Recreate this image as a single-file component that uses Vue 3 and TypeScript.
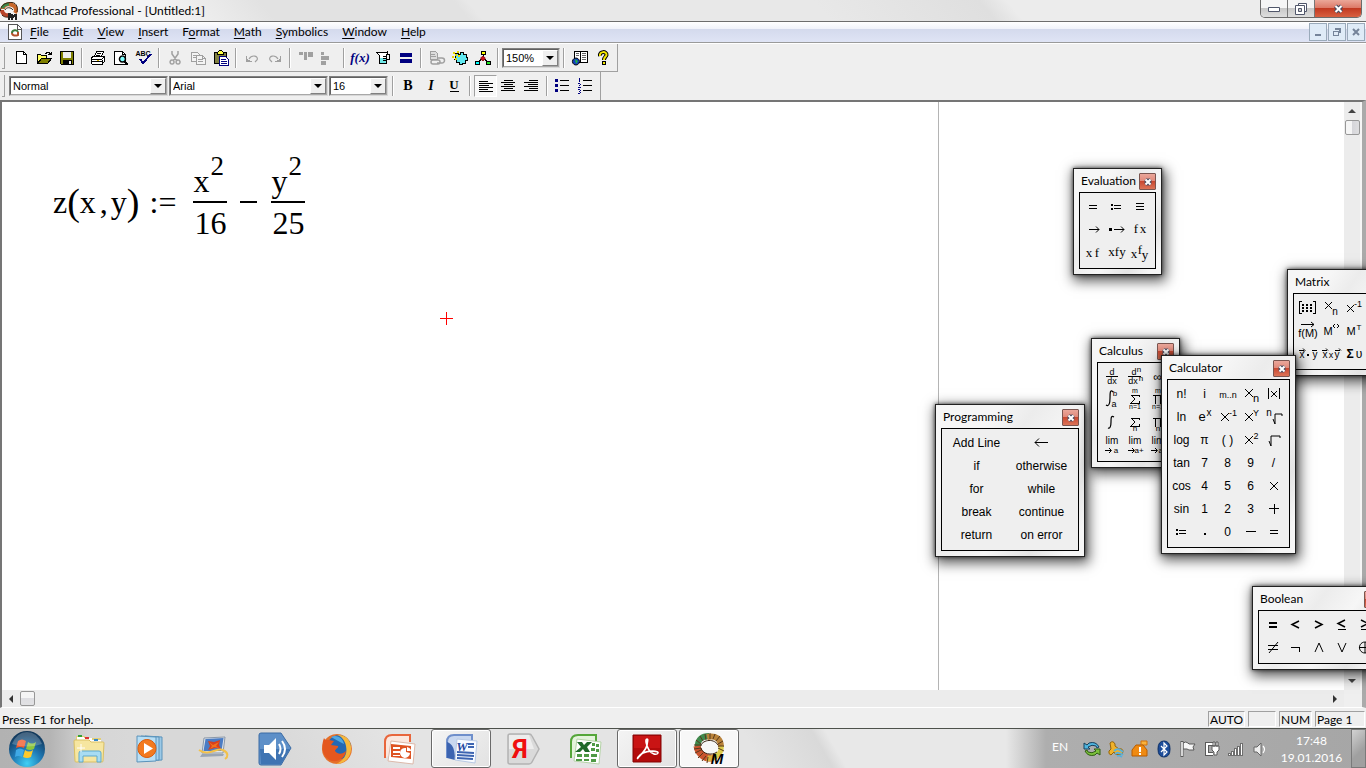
<script setup lang="ts">
import { defineComponent, h, ref, type PropType } from 'vue'

interface Shape {
  d?: string
  f?: string
  s?: string
  w?: number
  soft?: boolean
  t?: string
  x?: number
  y?: number
  z?: number
  ff?: string
  b?: boolean
  i?: boolean
}

const p = (d: string, f = 'none', s = 'none', w = 1): Shape => ({ d, f, s, w })
const c = (d: string, f = 'none', s = 'none', w = 1): Shape => ({ d, f, s, w, soft: true })
const t = (text: string, x: number, y: number, z = 9, o: Partial<Shape> = {}): Shape => ({ t: text, x, y, z, ...o })

const Pic = defineComponent({
  props: {
    shapes: { type: Array as PropType<Shape[]>, required: true },
    w: { type: Number, default: 16 },
    h: { type: Number, default: 16 },
  },
  setup(props) {
    return () =>
      h(
        'svg',
        { width: props.w, height: props.h, viewBox: `0 0 ${props.w} ${props.h}`, 'aria-hidden': 'true', style: 'display:block;flex:none;overflow:visible' },
        props.shapes.map((a) =>
          a.t !== undefined
            ? h('text', { x: a.x, y: a.y, 'font-size': a.z, fill: a.f ?? '#000', 'text-anchor': 'middle', 'font-family': a.ff ?? '"Liberation Sans", sans-serif', 'font-weight': a.b ? 700 : 400, 'font-style': a.i ? 'italic' : 'normal' }, a.t)
            : h('path', { d: a.d, fill: a.f, stroke: a.s, 'stroke-width': a.w, 'shape-rendering': a.soft ? 'auto' : 'crispEdges' }),
        ),
      )
  },
})

const serif = { ff: '"Liberation Serif", serif' }
const K = '#000'
const N = '#000080'
const G = '#a0a0a0'

const logo: Shape[] = [
  c('M3 7C3 3 8 1 12 3C16 4 17 8 15 11', 'none', '#c8672a', 4),
  c('M2 8C2 12 6 14 10 13', 'none', '#b8452a', 4),
  c('M2 6C4 3 7 2 9 2.500', 'none', '#3c8a4a', 3),
  c('M.5 9C0 3 7 0 12 .5S18 6 17 10M5 8C6 5 11 5 13 8M2 13C5 16 8 15 10 15', 'none', '#3a2412', 1),
  p('M8 11h3v1h2v1h1v-1h3v6h-2v-3h-1v1h-1v2h-2v-2h-1v2h-2z', '#222'),
]
const doc: Shape[] = [p('M.5.5h9l4 4v11h-13z', '#fff', '#555'), p('M9.500 1v4h4', 'none', '#555'), c('M4 9C4 6 9 5 10 8', 'none', '#3c7a3c', 2), c('M4 9C4 12 8 12 10 11V8', 'none', '#b4502a', 2)]

interface Tool { name: string; g?: Shape[]; sep?: boolean; on?: boolean; zoom?: boolean }
const sep: Tool = { name: '', sep: true }

const tools: Tool[] = [
  { name: 'New', g: [p('M3.500 1.500h7l3 3v9h-10z', '#fff', K), p('M10.500 1.500v3h3', 'none', K)] },
  { name: 'Open', g: [p('M1.500 13.500v-9h3l1 1h5v3h-5z', '#ffff60', K), p('M1.500 13.500l4-5h10l-4 5z', '#808000', K), p('M9 3h1v-1h3v1h1v1h1v-2M12 4.500h3', 'none', K)] },
  { name: 'Save', g: [p('M1.500 1.500h13v13h-12l-1-1z', '#808000', K), p('M4 2h8v6h-8z', '#efefef'), p('M4 10h9v4h-9z', K), p('M10 11h2v3h-2z', '#efefef')] },
  sep,
  { name: 'Print', g: [p('M4.500 6.500l2-5h7l-2 5', '#fff', K), p('M7 3.500h4M6 5.500h4', 'none', K), p('M1.500 7.500l2-1h11v5l-3 3h-9l-1-1z', '#fff', K), p('M1.500 9.500h10l3-3M2 11.500h10v3M12 9.500v2', 'none', K), p('M7 10h2v1h-2z', '#d0b000')] },
  { name: 'Print Preview', g: [p('M1.500 1.500h8l3 3v10h-11z', '#fff', K), p('M9.500 1.500v3h3', 'none', K), c('M9.500 6a3 3 0 1 1-.1 0', '#80ffff', K, 1.500), p('M11 11h2v1h1v1h1v2h-2v-1h-1v-1h-1z', K)] },
  { name: 'Spelling', g: [t('ABC', 7, 6, 7, { b: true }), p('M4 9l3 4 8-9', 'none', N, 2)] },
  sep,
  { name: 'Cut', g: [c('M5 1v3l5 7M11 1v3l-5 7M5 10a2 2 0 1 0 .1 0M11 10a2 2 0 1 0 .1 0', 'none', G, 1.500)] },
  { name: 'Copy', g: [p('M1.500 2.500h6l2 2v7h-8z', '#f4f4f4', G), p('M3 5.500h4M3 7.500h4', 'none', G), p('M6.500 5.500h6l3 3v6h-9z', '#f4f4f4', G), p('M8 9.500h5M8 11.500h5M12.500 5.500v3h3', 'none', G)] },
  { name: 'Paste', g: [p('M1.500 2.500h12v11h-12z', '#808040', K), p('M4.500 2.500l2-2h2l2 2v2h-6z', '#ffff40', K), p('M6.500 6.500h6l3 3v6h-9z', '#fff', N), p('M8 9.500h5M8 11.500h6M8 13.500h6', 'none', N)] },
  sep,
  { name: 'Undo', g: [p('M2 6v6h6v-1h-2v-1h-2v-1h-1v-3z', G), c('M5 9C8 4 15 6 13 10L11 12', 'none', G, 1.200)] },
  { name: 'Redo', g: [p('M14 6v6h-6v-1h2v-1h2v-1h1v-3z', G), c('M11 9C8 4 1 6 3 10L5 12', 'none', G, 1.200)] },
  sep,
  { name: 'Align Across', g: [p('M1 2h4v3h-4zM6 2h3v8h-3zM10 2h5v5h-5z', G)] },
  { name: 'Align Down', g: [p('M0 2h3v3h-3zM0 6h8v4h-8zM0 11h5v4h-5z', G)] },
  sep,
  { name: 'Insert Function', g: [t('f(x)', 8, 12, 13, { ff: '"Liberation Serif", serif', b: true, i: true, f: N })] },
  { name: 'Insert Unit', g: [p('M1.500 2.500h10l1-1v2l-1 2v8h-7v-8l-3-3z', '#fff', K), p('M5 8h6v5h-6z', '#70e8e8'), p('M12 4.500h2.500v5h-3M8 6.500h3M8 8.500h3M8 10.500h3', 'none', K)] },
  { name: 'Calculate', g: [p('M2 3h12v4h-12zM2 9h12v4h-12z', N)] },
  sep,
  { name: 'Insert Hyperlink', g: [p('M1.500 1.500h5l2 2v6h-7z', '#ddd', G), p('M2 4.500h4M2 6.500h5', 'none', G), c('M4 10h5a2 2 0 0 1 0 4h-5a2 2 0 0 1 0-4M8 8h5a2 2 0 0 1 0 5h-5', 'none', G, 1.500)] },
  { name: 'Component Wizard', g: [p('M4 3h2v1h2v-2h3v2h3v3h1v3h-2v3h-3v1h-3v-2h-3v-3h-1z', '#60e8f0', K), p('M1 2h2v2h-2zM5 1h2v2h-2zM3 4h2v2h-2zM0 6h2v2h-2zM6 5h2v2h-2zM3 8h2v2h-2z', '#e8d800')] },
  { name: 'Run MathConnex', g: [p('M8 5v4M8 8l-5 4M8 8l5 4', 'none', K), p('M6.500 1.500h4v3h-4z', '#ff0', K), c('M8 6.500a2 2 0 1 1-.1 0', '#d01020', '#800'), p('M.5 11.500h4v3h-4z', '#0ff', K), p('M11.500 11.500h4v3h-4z', '#20e820', K)] },
  sep,
  { name: 'Zoom', zoom: true },
  sep,
  { name: 'Resource Center', g: [p('M3.500 1.500h5v11h-6v-11zM8.500 1.500h7v11h-7', '#fff', K), p('M4 3.500h3M4 5.500h3M10 3.500h4M10 5.500h4M10 7.500h4M10 9.500h4', 'none', '#666'), c('M4 8a3.500 3.500 0 1 1-.1 0', '#1540c0', K), c('M3 9l3 2-2 3', '#20b840')] },
  { name: 'Help', g: [c('M5 6C4 1 12 1 11.500 5C11 7 9 7 9 10', 'none', K, 4), c('M5 6C4 1 12 1 11.500 5C11 7 9 7 9 10', 'none', '#f5e800', 2), p('M7.500 11.500h3v3h-3z', '#f5e800', K)] },
]

const lines = (a: number[][]): Shape[] => [p(a.map(([x, y, w]) => `M${x} ${y}.5h${w}`).join(''), 'none', K)]
const bserif = { ff: '"Liberation Serif", serif', b: true }
const formats: Tool[] = [
  { name: 'Bold', g: [t('B', 7, 12, 14, bserif)] },
  { name: 'Italic', g: [t('I', 7, 12, 14, { ...bserif, i: true })] },
  { name: 'Underline', g: [t('U', 7, 11, 13, bserif), p('M3 13.500h9', 'none', K)] },
  sep,
  { name: 'Align Left', on: true, g: lines([[1, 3, 9], [1, 5, 14], [1, 7, 10], [1, 9, 14], [1, 11, 9], [1, 13, 14]]) },
  { name: 'Center', g: lines([[3, 2, 9], [0, 4, 14], [3, 6, 9], [0, 8, 14], [3, 10, 9], [0, 12, 14]]) },
  { name: 'Align Right', g: lines([[5, 2, 9], [0, 4, 14], [4, 6, 10], [0, 8, 14], [5, 10, 9], [0, 12, 14]]) },
  sep,
  { name: 'Bullets', g: [p('M0 1h3v3h-3zM0 6h3v3h-3zM0 11h3v3h-3z', N), p('M5 2.500h9M5 7.500h9M5 12.500h9', 'none', K)] },
  { name: 'Numbering', g: [p('M1 .5h1M1.500 0v4M0 5.500h2M2.500 6v1M1.500 7v1M0 9.500h3M0 11.500h2M2.500 12v1M1 13.500h1M2.500 14v1M0 15.500h2', 'none', N), p('M5 2.500h9M5 7.500h9M5 12.500h9', 'none', K)] },
]

const menus = ['File', 'Edit', 'View', 'Insert', 'Format', 'Math', 'Symbolics', 'Window', 'Help'].map((m) => {
  const at = m === 'Format' ? 1 : 0
  return { pre: m.slice(0, at), key: m[at], post: m.slice(at + 1) }
})

interface Key { l?: string; g?: Shape[]; n?: string }
interface Palette { title: string; x: number; y: number; cols: number; cell: number; keys: Key[] }
const L = (...s: string[]): Key[] => s.map((l) => ({ l }))
const g = (n: string, ...s: Shape[]): Key => ({ n, g: s })

const eq = p('M7 10.500h8M7 13.500h8', 'none', K)
const assign = g('Definition', p('M6 9h2v2h-2zM6 13h2v2h-2z', K), p('M9 10.500h7M9 13.500h7', 'none', K))
const sigma = p('M8 7h8v2M8 7l4 4-4 4h8v-2', 'none', K)
const pi = p('M7 7.500h10M9.500 7v9M14.500 7v9', 'none', K)
const lim = (end: string): Key => g('Limit ' + end, t('lim', 12, 10, 10), c('M5 16.500h6M9 14l2.500 2.500-2.500 2.500', 'none', K), t(end, 16, 19, 8))
const arrow = (x: number) => c(`M${x} 11.500h10M${x + 7} 8.500l3 3-3 3`, 'none', K)

const palettes: Palette[] = [
  {
    title: 'Evaluation', x: 1073, y: 168, cols: 3, cell: 23,
    keys: [
      g('Evaluate', eq), assign, g('Global Definition', p('M8 8.500h8M8 11.500h8M8 14.500h8', 'none', K)),
      g('Symbolic Evaluation', arrow(7)), g('Symbolic Keyword', p('M4 10h3v3h-3z', K), arrow(9)), g('Prefix', t('f', 8, 15, 13, serif), t('x', 15, 15, 13, serif)),
      g('Postfix', t('x', 7, 16, 13, serif), t('f', 15, 16, 13, serif)), g('Infix', t('xfy', 12, 15, 13, serif)), g('Treefix', t('x', 6, 17, 13, serif), t('f', 12, 13, 13, serif), t('y', 17, 18, 13, serif)),
    ],
  },
  {
    title: 'Matrix', x: 1287, y: 269, cols: 4, cell: 23,
    keys: [
      g('Matrix', p('M6 5.500h-2.500v12h2.500M17 5.500h2.500v12h-2.500', 'none', K), p('M6 8h2v2h-2zM10 8h2v2h-2zM14 8h2v2h-2zM6 11h2v2h-2zM10 11h2v2h-2zM14 11h2v2h-2zM6 14h2v2h-2zM10 14h2v2h-2zM14 14h2v2h-2z', K)),
      g('Subscript', c('M6 6l7 7M13 6l-7 7', 'none', K), t('n', 16, 19, 10)), g('Inverse', c('M5 9l7 7M12 9l-7 7', 'none', K), t('-1', 16, 11, 9)), g('Determinant', p('M5.500 6v11M16.500 6v11', 'none', K), c('M8 9l6 6M14 9l-6 6', 'none', K)),
      g('Vectorize', t('f(M)', 12, 18, 11), c('M5 5.500h13M15 3l3 2.500-3 2.500', 'none', K)), g('Column', t('M', 9, 16, 11), c('M16 5l-2 2 2 2M18 5l2 2-2 2', 'none', K)), g('Transpose', t('M', 9, 16, 11), t('T', 17, 11, 8)), g('Range', p('M4 14h2v2h-2zM10 14h2v2h-2zM16 14h2v2h-2z', K)),
      g('Dot Product', t('x', 6, 16, 10), p('M11 12h2v2h-2z', K), t('y', 19, 16, 10), c('M3 8.500h5M7 6.500l2 2-2 2M16 8.500h5', 'none', K)), g('Cross Product', t('x', 6, 16, 10), t('x', 12, 16, 9), t('y', 18, 16, 10), c('M3 8.500h5M7 6.500l2 2M16 8.500h5M20 6.500l2 2', 'none', K)), g('Vector Sum', t('Σ', 8, 16, 12, { b: true }), t('υ', 17, 16, 12)), g('Picture', p('M5.500 6.500h12v10h-12z', 'none', K)),
    ],
  },
  {
    title: 'Programming', x: 935, y: 404, cols: 2, cell: 65,
    keys: [{ l: 'Add Line' }, g('Local Definition', c('M5 11.500h13M9 7.500l-4 4 4 4', 'none', K)), ...L('if', 'otherwise', 'for', 'while', 'break', 'continue', 'return', 'on error')],
  },
  {
    title: 'Calculus', x: 1091, y: 338, cols: 3, cell: 23,
    keys: [
      g('Derivative', t('d', 12, 10, 9), p('M6 11.500h12', 'none', K), t('dx', 12, 19, 9)), g('Nth Derivative', t('d', 11, 10, 9), t('n', 16, 7, 8), p('M5 11.500h13', 'none', K), t('dx', 10, 19, 9), t('n', 18, 16, 8)), { l: '∞' },
      g('Definite Integral', c('M13 4C10 1 10 5 10 10S9 19 6 17', 'none', K, 1.200), t('b', 15, 8, 8), t('a', 14, 19, 9)), g('Summation', t('m', 12, 5, 7), sigma, t('n=1', 12, 21, 7)), g('Product', t('m', 12, 5, 7), pi, t('n=1', 12, 21, 7)),
      g('Indefinite Integral', c('M14 6C11 4 11 7 11 11S10 18 8 17', 'none', K, 1.200)), g('Range Sum', sigma, t('n', 12, 20, 8)), g('Range Product', pi, t('n', 12, 20, 8)),
      lim('a'), lim('a+'), lim('a-'),
    ],
  },
  {
    title: 'Calculator', x: 1161, y: 355, cols: 5, cell: 23,
    keys: [
      ...L('n!', 'i'), g('Range', t('m..n', 12, 16, 9)), g('Subscript', c('M6 7l8 8M14 7l-8 8', 'none', K), t('n', 17, 20, 11)), g('Absolute Value', p('M6.500 6v11M17.500 6v11', 'none', K), c('M9 9l6 6M15 9l-6 6', 'none', K)),
      ...L('ln'), g('Exponential', t('e', 9, 16, 13), t('x', 16, 11, 10)), g('Inverse', c('M5 8l8 8M13 8l-8 8', 'none', K), t('-1', 17, 11, 9)), g('Power', c('M6 8l8 8M14 8l-8 8', 'none', K), t('Y', 17, 11, 9)), g('Nth Root', t('n', 7, 11, 10), c('M11 14l2 5V9h7v2', 'none', K)),
      ...L('log', 'π', '( )'), g('Square', c('M6 8l8 8M14 8l-8 8', 'none', K), t('2', 17, 11, 9)), g('Square Root', c('M7 13l2 5V8h9v2', 'none', K)),
      ...L('tan', '7', '8', '9', '/', 'cos', '4', '5', '6'), g('Multiply', c('M8 8l8 8M16 8l-8 8', 'none', K)),
      ...L('sin', '1', '2', '3'), g('Add', p('M7 11.500h10M12 6.500v10', 'none', K)),
      assign, g('Decimal Point', p('M11 13h2v2h-2z', K)), { l: '0' }, g('Subtract', p('M7 11.500h10', 'none', K)), g('Evaluate', p('M8 10.500h8M8 13.500h8', 'none', K)),
    ],
  },
  {
    title: 'Boolean', x: 1252, y: 586, cols: 5, cell: 23,
    keys: [
      g('Equal', p('M8 10h8M8 14h8', 'none', K, 2)), g('Less', c('M15 8l-7 3.500 7 3.500', 'none', K, 1.500)), g('Greater', c('M8 8l7 3.500-7 3.500', 'none', K, 1.500)), g('Less or Equal', c('M15 7l-7 3.500 7 3.500', 'none', K, 1.500), p('M8 16.500h8', 'none', K)), g('Greater or Equal', c('M8 7l7 3.500-7 3.500', 'none', K, 1.500), p('M8 16.500h8', 'none', K)),
      g('Not Equal', p('M7 9.500h10M7 13.500h10', 'none', K), c('M8 17l9-11', 'none', K)), g('Not', p('M7 11.500h8v4', 'none', K)), g('And', c('M8 16l4-9 4 9', 'none', K)), g('Or', c('M8 7l4 9 4-9', 'none', K)), g('Xor', c('M12 6a5.500 5.500 0 1 1-.1 0M12 6v11M6 11.500h12', 'none', K)),
    ],
  },
]

const apps: { name: string; g: Shape[]; open?: boolean; front?: boolean }[] = [
  { name: 'Explorer', g: [
    p('M3 3h9l1 2h15v20h-26z', '#e3cf78'), c('M4 4h7v3h-7z', '#fff'), c('M5 2h4v2h-4z', '#35a035'), c('M11 5h8v4h-8z', '#fff'), c('M12 4h4v2h-4z', '#d33'), c('M19 7h9v4h-9z', '#fff'), c('M21 6h4v2h-4z', '#38c'),
    c('M1 8q0-1 1-1h14l2 2h12q1 0 1 1l-1 18q0 1-1 1h-26q-1 0-1-1z', '#f6e6a0', '#d9bf62'), c('M6 29v-9q0-2 2-2h18q2 0 2 2v9h-4v-6h-14v6z', '#a8dcf2', '#5fa9cc'), c('M8 11v8M4 15h8', 'none', '#fff', 1),
  ] },
  { name: 'Windows Media Player', g: [
    c('M10 3l17 1v23l-17 1z', '#9cc9e6', '#5a93bb'), c('M6 3l18 1v23l-18 1z', '#a9d3ee', '#5a93bb'), c('M2 3l19 1v24l-19 1z', '#b9dff5', '#5a93bb'), c('M12 6.500a9 9 0 1 1-.1 0', '#f37a1f', '#d95b0c'), c('M9 10v11l9-5.500z', '#fff'),
  ] },
  { name: 'Picture Viewer', g: [
    c('M7 5l21-1-2 16-21 0z', '#dfe5ec', '#8a97a8'), c('M8.500 6l18-1-2 13h-18z', '#4b7cc4'), c('M11 8l6 1 6-2-1 5 2 4-6-1-7 2 2-4z', '#d7401e'), c('M12 9l4 3 6-3-3 4 3 2-5-1-4 2 2-3z', '#f0721e'), c('M5 21l22 0-1 2-23 1z', '#9aa5b3'), c('M2 17C12 24 20 14 26 17S31 24 28 26', 'none', '#f2c14a', 2),
  ] },
  { name: 'Audio Wizard', g: [
    c('M2 0h20l10 15-10 17h-20q-2 0-2-2v-28q0-2 2-2z', '#5d8fc8', '#3c6ca5'), c('M1 16h30l-9 15h-20z', '#3f74b3'), c('M5 12h5l7-7v22l-7-7h-5z', '#fff'), c('M20 11q3 5 0 10M23 8q6 8 0 16', 'none', '#fff', 2),
  ] },
  { name: 'Firefox', g: [
    c('M16 1a15 15 0 1 1-.1 0', '#e5702a'), c('M18 2a12 12 0 1 1-.1 0', '#2468b4'), c('M16 2C25 1 31 8 30 17C29 26 22 31 15 31C22 28 27 22 25 13C24 7 20 3 16 2', '#f6b73c'), c('M3 5C4 7 5 7 8 7L13 8L10 12L17 13C18 15 14 16 14 18C17 22 22 21 25 18C24 27 13 31 7 26C1 22 0 12 3 5', '#e4571e'), c('M10 4C17 1 22 6 23 11L19 9z', '#4fa8e2'),
  ] },
  { name: 'PowerPoint', g: [
    c('M2 25V9q0-7 7-7h18v7', '#fbe7de', '#e8663c', 2), c('M8 8l24 3-2 20-25-3z', '#fff', '#dcb9aa'), c('M8 11l20 2v13l-20-2z', '#de5322'), c('M10 14h7v2h-7zM10 18h7v2h-7zM10 22h7v1h-7z', '#fff'), c('M23 15a5 5 0 1 0 4 5l-4-1z', '#fff'), c('M24 14q4 1 4 4h-4z', '#fff'),
  ] },
  { name: 'Word', open: true, g: [
    c('M2 25V9q0-7 7-7h18v7', '#c9d8f0', '#6f8fcb', 2), c('M2 25V9q8 2 8 18z', '#3c64b1'), c('M12 6l20 2-2 22-20-3z', '#f8fbff', '#b7c9e4'), t('W', 17, 18, 13, { ...serif, b: true, i: true, f: '#274b9f' }), c('M23 11h6M23 14h6M12 19l17 1M12 22l17 1M12 25l16 1', 'none', '#3c64b1', 2),
  ] },
  { name: 'Yandex', g: [c('M3 1h19q2 0 3 2l7 13-7 13q-1 2-3 2h-19q-2 0-2-2v-26q0-2 2-2z', '#dadada', '#b3b3b3', 1.500), c('M2 2h20l5 14h-25z', '#ededed'), t('Я', 13, 25, 26, { ff: 'Roboto, sans-serif', b: true, f: '#f00f0f' })] },
  { name: 'Excel', g: [
    c('M2 25V9q0-7 7-7h18v7', '#e4f3dc', '#55a63a', 2), c('M8 6l24 3-2 22-25-3z', '#fff', '#b4d3a6'), c('M8 9h5l2 3 3-3h5l-5 5 3 5h-5l-2-3-3 3h-5l6-5z', '#20692a'), c('M23 10h3v3h-3zM27 11h3v3h-3zM22 15h4v3h-4zM27 16h3v3h-3zM8 21h5v3h-5zM15 21h5v3h-5zM22 21h6v3h-6zM7 26h6v2h-6zM15 26h5v2h-5zM22 26h5v3h-5z', '#4f9a45'),
  ] },
  { name: 'Adobe Reader', open: true, g: [c('M2 2h28v27h-28z', '#b30b0b', '#850505'), c('M3 3h26v12h-26z', '#c91414'), c('M16 6C14 6 15 12 18 17S26 22 27 20S18 17 12 20S6 27 7 25S15 18 16 12S17 6 16 6', 'none', '#fff', 1.600)] },
  { name: 'Mathcad', open: true, front: true, g: [
    c('M5 14C4 6 10 3 16 3', 'none', '#3f8a4c', 6), c('M14 4C23 2 28 6 28 14', 'none', '#b9823a', 6), c('M28 13C29 18 26 22 22 23', 'none', '#dccb4a', 5), c('M4 13C5 20 11 26 19 25', 'none', '#c9532e', 7), c('M14 25C17 26 21 25 23 23', 'none', '#d8b23e', 6),
    c('M1 12h7M1 16l7-1M2 20l6-3M5 25l5-5M9 28l4-5M14 30l1-6M3 7l5 4M7 3l3 5M12 1l1 6M17 0v6M22 1l-2 5M27 3l-4 5M30 8l-5 3M31 13h-6M31 18l-6-3', 'none', '#57391c', 1), c('M8 13C8 8 20 4 25 12M8 15C9 21 19 23 24 19', 'none', '#3a2412', 1), t('M', 24, 31, 15, { b: true, i: true }),
  ] },
]

const W = '#fff'
const tray: { name: string; g: Shape[] }[] = [
  { name: 'Sync', g: [c('M0 2v6h6l-2-2q4-3 8-1l1 2 2-1Q12 0 5 2L3 4z', '#4fb6e0', '#17405c'), c('M16 14V8h-6l2 2q-4 3-8 1l-1-2-2 1Q4 16 11 14l2-2z', '#7cc23c', '#2f5c14')] },
  { name: 'Network Tools', g: [c('M2 2q3-3 5 1v2l4 3q4-1 4 3l-2 3-6-1-1-2-3 3q-3-1-2-4l2-2z', '#f0b22a', '#93640a'), c('M6 10q4-4 9 1M7 13q3-3 8 1M9 15q2-1 5 1', 'none', '#5ab0dc', 1.800)] },
  { name: 'Update', g: [c('M9 5V0h6v4h-5', '#f9b23c', '#d07008'), c('M0 9l4-5h7l4 5v6h-15z', '#ef8a12', '#b85c00'), p('M7 6h2v5h-2zM7 12h2v2h-2z', W)] },
  { name: 'Bluetooth', g: [c('M8 0q6 0 6 8t-6 8-6-8 6-8', '#1d4d9a', '#0c2f66'), c('M5 5l6 6-3 3V2l3 3-6 6', 'none', W, 1.200)] },
  { name: 'Action Center', g: [c('M3 2q3-2 5 0l1 1h6l-2 3 1 3h-5l-2-1h-4z', '#f6f6f6', '#5a5a5a'), c('M2 0v16', 'none', '#5a5a5a', 3), c('M2 1v14', 'none', W, 1.500)] },
  { name: 'Power', g: [c('M9 3h-6v10h6', 'none', '#5a5a5a', 4), c('M9 3h-6v10h6', 'none', W, 2), c('M8 5h7v4l-2 2v3h-3v-3l-2-2zM9 1h2v4h-2zM12 1h2v4h-2z', W, '#5a5a5a')] },
  { name: 'Network', g: [p('M0 12h3v3h-3zM3 10h3v5h-3zM6 7h3v8h-3zM9 5h3v10h-3zM12 2h3v13h-3z', '#6e6e6e'), p('M1 13h1v1h-1zM4 11h1v3h-1zM7 8h1v6h-1zM10 6h1v8h-1zM13 3h1v11h-1z', W)] },
  { name: 'Volume', g: [c('M2 6h3l4-4v13l-4-4h-3z', '#eee', '#666'), c('M11 5q3 3 0 7', 'none', '#fff', 1.200)] },
]

const style = ref('Normal')
const font = ref('Arial')
const size = ref('16')
const zoom = ref('150%')
const closeX: Shape[] = [c('M1.500 2l6 6M7.500 2l-6 6', 'none', '#454b60', 4), c('M1.500 2l6 6M7.500 2l-6 6', 'none', '#fff', 2)]
</script>

<template>
  <div class="desktop">
    <header class="titlebar">
      <Pic :shapes="logo" :w="17" :h="18" />
      <h1>Mathcad Professional - [Untitled:1]</h1>
      <div class="caption">
        <button aria-label="Minimize" class="min"><Pic :shapes="[c('M.500 3.500h11v4h-11z', '#fff', '#50566a')]" :w="12" :h="10" /></button>
        <button aria-label="Restore" class="max"><Pic :shapes="[c('M3.500.5h8v8h-8z', '#fff', '#50566a'), c('M.5 2.500h9v9h-9z', '#fff', '#50566a'), c('M3.500 5.500h3v3h-3z', '#ccc', '#50566a')]" :w="12" :h="12" /></button>
        <button aria-label="Close" class="close"><Pic :shapes="closeX" :w="9" :h="10" /></button>
      </div>
    </header>

    <nav class="menubar" aria-label="Main menu">
      <Pic :shapes="doc" :w="14" :h="16" />
      <div class="menus">
        <button v-for="m in menus" :key="m.key + m.post">{{ m.pre }}<u>{{ m.key }}</u>{{ m.post }}</button>
      </div>
      <div class="mdi">
        <button aria-label="Minimize document"><Pic :shapes="[p('M2 7h6v2h-6z', '#75849a')]" :w="10" :h="10" /></button>
        <button aria-label="Restore document"><Pic :shapes="[p('M3 1h6v5h-2v-3h-4z', '#75849a'), p('M1.500 4.500h5v4h-5z', '#dfeaf6', '#75849a')]" :w="10" :h="10" /></button>
        <button aria-label="Close document"><Pic :shapes="[c('M2 2l6 6M8 2l-6 6', 'none', '#75849a', 2)]" :w="10" :h="10" /></button>
      </div>
    </nav>

    <div class="bars">
      <div class="toolbar">
        <i class="grip"></i>
        <template v-for="(b, n) in tools" :key="n">
          <i v-if="b.sep" class="sep"></i>
          <span v-else-if="b.zoom" class="combo zoom">
            <select v-model="zoom" aria-label="Zoom"><option>150%</option><option>100%</option></select><i class="drop"></i>
          </span>
          <button v-else class="tool" :aria-label="b.name"><Pic :shapes="b.g!" /></button>
        </template>
        <i class="edge"></i>
      </div>
      <div class="toolbar">
        <i class="grip"></i>
        <span class="combo wide"><select v-model="style" aria-label="Style"><option>Normal</option></select><i class="drop"></i></span>
        <span class="combo wide"><select v-model="font" aria-label="Font"><option>Arial</option></select><i class="drop"></i></span>
        <span class="combo"><select v-model="size" aria-label="Font size"><option>16</option></select><i class="drop"></i></span>
        <i class="sep"></i>
        <template v-for="(b, n) in formats" :key="n">
          <i v-if="b.sep" class="sep"></i>
          <button v-else class="tool" :class="{ on: b.on }" :aria-label="b.name"><Pic :shapes="b.g!" /></button>
        </template>
        <i class="edge"></i>
      </div>
    </div>

    <main class="workspace">
      <div class="sheet">
        <div class="formula">
          <span>z</span><span class="paren">(</span><span>x</span><span class="comma">,</span><span>y</span><span class="paren">)</span>
          <span class="assign">:=</span>
          <span class="frac"><span>x<sup>2</sup></span><span>16</span></span>
          <span class="minus"></span>
          <span class="frac"><span>y<sup>2</sup></span><span>25</span></span>
        </div>
        <i class="margin"></i>
        <i class="cursor"></i>
      </div>
      <div class="vscroll">
        <button aria-label="Scroll up"><Pic :shapes="[c('M4 0l4 4h-8z', '#444')]" :w="8" :h="5" /></button>
        <i class="thumb"></i>
        <button aria-label="Scroll down" class="end"><Pic :shapes="[c('M0 0h8l-4 4z', '#444')]" :w="8" :h="5" /></button>
      </div>
      <div class="hscroll">
        <button aria-label="Scroll left"><Pic :shapes="[c('M4 0v8l-4-4z', '#333')]" :w="5" :h="8" /></button>
        <i class="thumb"></i>
        <button aria-label="Scroll right" class="end"><Pic :shapes="[c('M0 0v8l4-4z', '#333')]" :w="5" :h="8" /></button>
      </div>
    </main>

    <section v-for="w in palettes" :key="w.title" class="palette" :aria-label="w.title" :style="{ left: w.x + 'px', top: w.y + 'px' }">
      <header>
        <h2>{{ w.title }}</h2>
        <button :aria-label="'Close ' + w.title"><Pic :shapes="[c('M1.500 1.500l5 5M6.500 1.500l-5 5', 'none', '#4b4f63', 4), c('M1.500 1.500l5 5M6.500 1.500l-5 5', 'none', '#fff', 2)]" :w="8" :h="8" /></button>
      </header>
      <div class="keys" :style="{ gridTemplateColumns: `repeat(${w.cols}, ${w.cell}px)` }">
        <button v-for="(k, n) in w.keys" :key="n" :aria-label="k.n">
          <Pic v-if="k.g" :shapes="k.g" :w="23" :h="23" /><template v-else>{{ k.l }}</template>
        </button>
      </div>
    </section>

    <footer class="status">
      <span class="hint">Press F1 for help.</span>
      <span class="cell auto">AUTO</span><span class="cell blank"></span><span class="cell num">NUM</span><span class="cell page">Page 1</span>
    </footer>

    <div class="taskbar">
      <button class="start" aria-label="Start">
        <Pic :shapes="[c('M9 10q4-3 8 0l-2 7q-4-2-8 0z', '#f0592a'), c('M19 11q4 3 8 0l-2 7q-4 2-8 0z', '#8cc63e'), c('M7 19q4-3 8 0l-2 7q-4-2-7 0z', '#3fa9e6'), c('M16 19q4 3 8 0l-2 7q-4 2-8 0z', '#fdc92b'), c('M3 13Q8 1 18 1T33 13Q18 18 3 13', 'rgba(255,255,255,.22)')]" :w="36" :h="36" />
      </button>
      <div class="apps">
        <button v-for="a in apps" :key="a.name" :aria-label="a.name" :class="{ open: a.open, front: a.front }"><Pic :shapes="a.g" :w="32" :h="32" /></button>
      </div>
      <div class="tray">
        <span class="lang">EN</span>
        <button v-for="i in tray" :key="i.name" :aria-label="i.name"><Pic :shapes="i.g" /></button>
        <div class="clock"><span>17:48</span><span>19.01.2016</span></div>
        <button class="peek" aria-label="Show desktop"></button>
      </div>
    </div>
  </div>
</template>

<style>
body {
  overflow: hidden;
}
</style>

<style scoped>
.desktop {
  position: relative;
  display: flex;
  flex-direction: column;
  height: 100vh;
  overflow: hidden;
  background: #efefef;
  color: #000;
  font: 12px/16px Lato, "Open Sans", sans-serif;
}
.desktop * {
  box-sizing: border-box;
}
button {
  display: flex;
  align-items: center;
  justify-content: center;
  padding: 0;
  border: 0;
  background: none;
  color: inherit;
  font: inherit;
}
h1,
h2 {
  margin: 0;
  font-size: 12px;
  font-weight: 400;
}
.titlebar {
  display: flex;
  align-items: center;
  gap: 4px;
  height: 22px;
  border-bottom: 1px solid #6d6d6d;
  background: linear-gradient(50deg, #f4f4f4 0 12%, #e2e2e2 20% 34%, #e8e8e8 35% 60%, #dfdfdf 72%, #ececec 74% 100%);
}
.caption {
  display: flex;
  align-self: flex-start;
  height: 18px;
  margin: 0 4px 0 auto;
  border: 1px solid #6b6b6b;
  border-top: 0;
  border-radius: 0 0 5px 5px;
  overflow: hidden;
}
.caption button {
  width: 27px;
  border-right: 1px solid #777;
  background: linear-gradient(#f5f5f5 0 45%, #c6c6c6 46%, #dedede);
}
.caption .close {
  width: 46px;
  border: 0;
  background: linear-gradient(#eba799 0, #dd7a68 45%, #c0361f 46%, #d86040);
}
.menubar {
  display: flex;
  align-items: center;
  height: 21px;
  padding-left: 8px;
  border-bottom: 1px solid #9a9a9a;
  background: linear-gradient(#fff 0, #f0f2fa 35%, #d4daed 36%, #dfe4f5);
}
.menus {
  display: flex;
  padding-left: 1px;
}
.menus button {
  display: block;
  height: 19px;
  padding: 0 7px;
}
.menus u {
  text-underline-offset: 2px;
}
.mdi {
  display: flex;
  gap: 1px;
  margin: 0 1px 0 auto;
}
.mdi button {
  width: 18px;
  height: 18px;
  border: 1px solid #9aaaba;
  background: #dfebf7;
}
.bars {
  display: flex;
  flex-direction: column;
  align-items: flex-start;
  border-top: 1px solid #fff;
}
.toolbar {
  display: flex;
  align-items: center;
  height: 28px;
  font: 11px/14px "Liberation Sans", sans-serif;
}
.toolbar:first-child {
  border-bottom: 1px solid #a0a0a0;
}
.toolbar i {
  flex: none;
}
.grip {
  width: 3px;
  height: 22px;
  margin: 0 4px 0 2px;
  border: 1px solid #a0a0a0;
  border-width: 0 1px 1px 0;
}
.edge {
  align-self: stretch;
  width: 4px;
  border-right: 1px solid #a0a0a0;
}
.sep {
  width: 2px;
  height: 20px;
  margin: 0 3px;
  border-left: 1px solid #a0a0a0;
  border-right: 1px solid #fff;
}
.tool {
  width: 23px;
  height: 22px;
}
.tool.on {
  border: 1px solid;
  border-color: #a0a0a0 #fff #fff #a0a0a0;
  background: #f8f8f8;
}
.combo {
  display: grid;
  width: 59px;
  height: 20px;
  margin-right: 1px;
  border: 1px solid;
  border-color: #808080 #d8d8d8 #d8d8d8 #808080;
  background: #fff;
}
.combo.wide {
  width: 159px;
}
.combo.zoom {
  width: 58px;
  margin: 0;
}
.combo > * {
  grid-area: 1 / 1;
}
.combo select {
  appearance: none;
  width: 100%;
  padding: 0 0 0 2px;
  border: 1px solid;
  border-color: #606060 #a8a8a8 #a8a8a8 #606060;
  border-radius: 0;
  background: none;
  color: #000;
  font: inherit;
}
.drop {
  display: grid;
  place-items: center;
  justify-self: end;
  width: 16px;
  height: 16px;
  margin: 1px;
  border: 1px solid;
  border-color: #fff #808080 #808080 #fff;
  background: #efefef;
  pointer-events: none;
}
.drop::after {
  content: "";
  border: 4px solid transparent;
  border-top-color: #000;
  border-bottom: 0;
}
.workspace {
  display: grid;
  flex: 1;
  grid-template-columns: 1fr 18px;
  grid-template-rows: 1fr 17px;
  min-height: 0;
  border: solid;
  border-width: 2px 4px 1px 2px;
  border-color: #757575 #aaa #fff #757575;
  background: #efefef;
}
.sheet {
  position: relative;
  background: #fff;
}
.margin {
  position: absolute;
  top: 0;
  bottom: 0;
  left: 936px;
  border-left: 1px solid #b4b4b4;
}
.cursor {
  position: absolute;
  left: 438px;
  top: 210px;
  width: 13px;
  height: 13px;
  background: linear-gradient(red, red) center / 1px 100% no-repeat, linear-gradient(red, red) center / 100% 1px no-repeat;
}
.formula {
  display: flex;
  align-items: center;
  padding: 50px 0 0 51px;
  font: 32px/32px "Liberation Serif", serif;
}
.paren {
  font-size: 38px;
}
.comma {
  margin: 0 3px 0 4px;
}
.assign {
  margin: 0 17px 0 10px;
}
.frac {
  display: flex;
  flex-direction: column;
  width: 34px;
  text-align: center;
}
.frac > span:first-child {
  height: 51px;
  padding-top: 13px;
  border-bottom: 2px solid #000;
  text-align: left;
}
.frac > span:last-child {
  height: 49px;
  padding-top: 4px;
}
.frac sup {
  margin-left: 1px;
  font-size: 27px;
  line-height: 0;
  vertical-align: 17px;
}
.minus {
  width: 17px;
  margin: 0 14px 0 13px;
  border-top: 2px solid #000;
}
.vscroll,
.hscroll {
  display: flex;
  background: #ececec;
}
.vscroll {
  flex-direction: column;
  align-items: center;
  border-right: 2px solid #f6f6f6;
}
.vscroll button {
  width: 16px;
  height: 18px;
}
.hscroll button {
  width: 18px;
  height: 17px;
}
.vscroll .end {
  margin-top: auto;
}
.hscroll .end {
  margin-left: auto;
}
.thumb {
  width: 15px;
  height: 15px;
  border: 1px solid #979797;
  border-radius: 2px;
  background: linear-gradient(90deg, #f5f5f5 45%, #d6d6da 50%, #dedee0);
}
.hscroll .thumb {
  align-self: center;
  background: linear-gradient(#f5f5f5 45%, #dedee2 50%, #e2e2e4);
}
.palette {
  position: absolute;
  padding: 5px;
  border: 1px solid #222;
  background: linear-gradient(125deg, #f6f6f6 0 25%, #ececec 40%, #f6f6f6 60%, #e4e4e4 78%, #f6f6f6 92%);
  box-shadow: 0 0 4px rgba(0, 0, 0, 0.7), 2px 4px 12px 2px rgba(0, 0, 0, 0.65);
}
.palette header {
  display: flex;
  justify-content: space-between;
  align-items: flex-start;
  height: 18px;
  padding-left: 2px;
  margin-top: -1px;
}
.palette header button {
  flex: none;
  width: 17px;
  height: 17px;
  border: 1px solid #7b5550;
  border-radius: 1px;
  background: linear-gradient(#eaa79b 0, #e28b7c 45%, #c8452e 46%, #dc7458);
}
.keys {
  display: grid;
  grid-auto-rows: 23px;
  margin-top: 1px;
  padding: 2px 4px 4px 2px;
  border: 1px solid #000;
  background: #efefef;
  font: 12px/16px "Liberation Sans", sans-serif;
}
.keys button {
  white-space: nowrap;
}
.status {
  display: flex;
  align-items: stretch;
  gap: 3px;
  height: 20px;
  padding: 3px 1px 1px 2px;
  line-height: 15px;
}
.hint {
  margin-right: auto;
  padding-top: 1px;
}
.cell {
  padding-left: 1px;
  border: 1px solid #a0a0a0;
  border-color: #a0a0a0 #fff #fff #a0a0a0;
}
.auto {
  width: 37px;
}
.blank {
  width: 28px;
}
.num {
  width: 33px;
}
.page {
  width: 50px;
  white-space: nowrap;
}
.taskbar {
  display: flex;
  height: 40px;
  border-top: 1px solid #4d514b;
  background: linear-gradient(90deg, #b2b2b2 0, #b4b4b4 50px, #d6d6d6 90px, transparent 130px calc(100% - 360px), #aeaeae calc(100% - 320px), #a6a6a6),
    linear-gradient(60deg, #d8d8d8 0 20%, #e4e4e4 30% 55%, #d9d9d9 60%, #e8e8e8 61% 100%);
}
.start {
  width: 36px;
  height: 36px;
  margin: 2px 14px 0 9px;
  border-radius: 50%;
  background: radial-gradient(circle at 50% 90%, #3fd0f5 0, #1e78b4 40%, #123f66 75%, #0c2a45);
}
.apps {
  display: flex;
  gap: 2px;
}
.apps button {
  width: 60px;
  height: 39px;
  border: 1px solid transparent;
  border-radius: 3px;
}
.apps .open {
  border-color: #6a6a6a;
  background: linear-gradient(135deg, #f4f4f4, #e2e2e2);
  box-shadow: inset 0 0 0 1px #fff;
}
.apps .front {
  background: #f7f7f7;
}
.tray {
  display: flex;
  align-items: center;
  margin-left: auto;
  color: #fff;
}
.lang {
  width: 26px;
  margin: 0 2px 4px 0;
}
.tray button {
  width: 24px;
}
.clock {
  display: flex;
  flex-direction: column;
  align-items: center;
  width: 79px;
  line-height: 17px;
}
.tray .peek {
  align-self: stretch;
  width: 15px;
  border: 1px solid #7a7a7a;
  background: linear-gradient(135deg, #d2d2d2, #a0a0a0 60%);
}
</style>
